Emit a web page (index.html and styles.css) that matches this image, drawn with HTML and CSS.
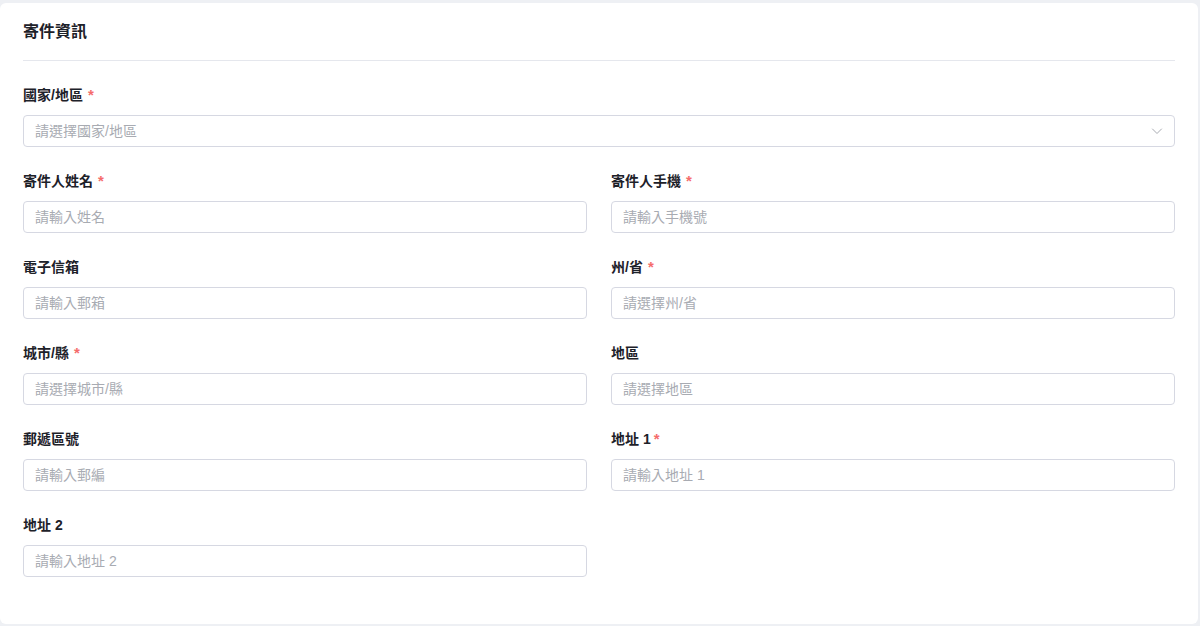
FILE: index.html
```html
<!DOCTYPE html>
<html lang="zh-Hant">
<head>
<meta charset="utf-8">
<title>寄件資訊</title>
<link rel="stylesheet" href="styles.css">
</head>
<body>
<section class="card">
  <h2 class="card-title">寄件資訊</h2>
  <div class="form">
    <div class="field full">
      <label class="label">國家/地區<span class="req">*</span></label>
      <div class="input select">
        <span class="ph">請選擇國家/地區</span>
        <svg class="chev" width="12" height="12" viewBox="0 0 12 12"><path d="M1.5 4 L6 8.5 L10.5 4" fill="none" stroke="#a8abb2" stroke-width="1" stroke-linecap="round" stroke-linejoin="round"/></svg>
      </div>
    </div>
    <div class="field">
      <label class="label">寄件人姓名<span class="req">*</span></label>
      <div class="input"><span class="ph">請輸入姓名</span></div>
    </div>
    <div class="field">
      <label class="label">寄件人手機<span class="req">*</span></label>
      <div class="input"><span class="ph">請輸入手機號</span></div>
    </div>
    <div class="field">
      <label class="label">電子信箱</label>
      <div class="input"><span class="ph">請輸入郵箱</span></div>
    </div>
    <div class="field">
      <label class="label">州/省<span class="req">*</span></label>
      <div class="input"><span class="ph">請選擇州/省</span></div>
    </div>
    <div class="field">
      <label class="label">城市/縣<span class="req">*</span></label>
      <div class="input"><span class="ph">請選擇城市/縣</span></div>
    </div>
    <div class="field">
      <label class="label">地區</label>
      <div class="input"><span class="ph">請選擇地區</span></div>
    </div>
    <div class="field">
      <label class="label">郵遞區號</label>
      <div class="input"><span class="ph">請輸入郵編</span></div>
    </div>
    <div class="field">
      <label class="label">地址 1<span class="req tight">*</span></label>
      <div class="input"><span class="ph">請輸入地址 1</span></div>
    </div>
    <div class="field">
      <label class="label">地址 2</label>
      <div class="input"><span class="ph">請輸入地址 2</span></div>
    </div>
  </div>
</section>
</body>
</html>
```

FILE: styles.css
```css
* { box-sizing: border-box; }
html, body { margin: 0; padding: 0; }
body {
  background: #eef0f4;
  font-family: "Liberation Sans", "Noto Sans CJK TC", sans-serif;
  color: #1d2129;
  padding: 3px 2px 2px 0;
  height: 626px;
}
.card {
  background: #fff;
  border-radius: 6px;
  padding: 17px 23px 23px;
  height: 621px;
}
.card-title {
  margin: 0;
  font-size: 16px;
  line-height: 24px;
  font-weight: 600;
  padding-bottom: 16px;
  border-bottom: 1px solid #e5e7ed;
}
.form {
  display: grid;
  grid-template-columns: 1fr 1fr;
  column-gap: 24px;
  row-gap: 24px;
  padding-top: 24px;
}
.field { display: flex; flex-direction: column; gap: 10px; }
.field.full { grid-column: 1 / -1; }
.label {
  font-size: 14px;
  line-height: 20px;
  font-weight: 600;
  color: #1d2129;
}
.req {
  color: #f56c6c;
  margin-left: 5px;
  font-weight: 600;
  font-size: 15px;
}
.req.tight { margin-left: 3px; }
.input {
  height: 32px;
  border: 1px solid #d6d8e2;
  border-radius: 4px;
  padding: 0 11px;
  display: flex;
  align-items: center;
  justify-content: space-between;
}
.ph {
  font-size: 14px;
  color: #a8abb2;
  line-height: 20px;
}
.chev { margin-right: 0; }
```
